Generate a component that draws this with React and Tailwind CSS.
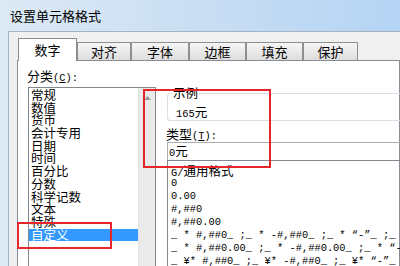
export default function App() {
  const cats = ["常规", "数值", "货币", "会计专用", "日期", "时间", "百分比", "分数", "科学记数", "文本", "特殊"];
  const tabs = [
    ["对齐", "w-[54px]"],
    ["字体", "w-[58px]"],
    ["边框", "w-[57px]"],
    ["填充", "w-[57px]"],
    ["保护", "w-[55px]"],
  ];
  const fmts = [
    "0",
    "0.00",
    "#,##0",
    "#,##0.00",
    "_ * #,##0_ ;_ * -#,##0_ ;_ * “-”_ ;_ @_ ",
    "_ * #,##0.00_ ;_ * -#,##0.00_ ;_ * “-”??_ ;_ @_ ",
    "_ ¥* #,##0_ ;_ ¥* -#,##0_ ;_ ¥* “-”_ ;_ @_ ",
  ];
  const mono = "font-['Liberation_Mono','Noto_Sans_CJK_SC',monospace] text-[10.4px]";
  const cjk = "font-['Noto_Sans_CJK_SC',sans-serif] text-[12.5px]";
  return (
    <div className="relative w-[400px] h-[266px] overflow-hidden bg-gradient-to-r from-[#dde9f5] via-[#c9def3] to-[#b4d4f4] font-['Noto_Sans_CJK_SC',sans-serif] text-[13px] text-black">
      <div className="h-[31px] pl-[10px] pt-[7px] leading-[18px] text-[13px]">设置单元格格式</div>
      <div className="ml-[8px] h-[235px] border-l border-t border-[#a3b3c4] bg-[#f0f0f0] pl-[8px] pt-[6px] flex flex-col">
        <div className="h-[23px] flex items-end">
          <div className="relative z-10 ml-[1px] w-[59px] h-[23px] bg-white border-l border-t border-r border-[#898c95] flex items-center justify-center leading-[16px] pb-[1px]">
            数字
          </div>
          {tabs.map(([t, w]) => (
            <div
              key={t}
              className={`${w} h-[19px] bg-gradient-to-b from-[#f5f5f5] to-[#dcdcdc] border-l border-t border-r border-[#8e8f8f] flex items-center justify-center leading-[16px]`}
            >
              {t}
            </div>
          ))}
        </div>
        <div className="-mt-px flex-1 bg-white border border-[#898c95] flex">
          <div className="ml-[9px] w-[129px] flex flex-col">
            <div className="mt-[7px] h-[16px] leading-[16px]">
              分类<span className={mono}>(<span className="underline">C</span>):</span>
            </div>
            <div className="mt-[3px] ml-[1px] w-[128px] flex-1 border border-[#828790] flex">
              <div className="w-[109px] pt-[1px]">
                {cats.map((c) => (
                  <div key={c} className="h-[12.7px] leading-[12.7px] pl-[2px] text-[12.5px] whitespace-nowrap">
                    {c}
                  </div>
                ))}
                <div className="h-[12.7px] leading-[12.7px] pl-[2px] text-[12.5px] bg-[#3399ff] text-white">自定义</div>
              </div>
              <div className="w-[17px] bg-[#eaeaea] border-l border-[#e0e0e0] flex justify-center pt-[8px]">
                <svg width="7" height="4" viewBox="0 0 7 4">
                  <path d="M0 4 L3.5 0 L7 4 Z" fill="#9a9a9a" />
                </svg>
              </div>
            </div>
          </div>
          <div className="ml-[10px] flex-1 flex flex-col">
            <div className="relative mt-[32px] ml-[1px] h-[28px] border border-[#d5dfe5] rounded-[3px] pl-[8px] pt-[10px]">
              <div className="absolute -top-[9px] left-[4px] px-[1px] bg-white leading-[16px] text-[12.5px]">示例</div>
              <div className="leading-[16px] whitespace-nowrap">
                <span className={mono}>165</span>
                <span className={cjk}>元</span>
              </div>
            </div>
            <div className="mt-[5px] h-[16px] leading-[16px] whitespace-nowrap">
              类型<span className={mono}>(<span className="underline">T</span>):</span>
            </div>
            <div className="ml-[1px] h-[18px] border-l border-t border-[#abadb3] pl-[1px] leading-[16px] whitespace-nowrap">
              <span className={mono}>0</span>
              <span className={cjk}>元</span>
            </div>
            <div className="ml-[1px] flex-1 border-l border-t border-[#828790] pt-[3px] pl-[3px]">
              <div className="h-[13px] leading-[13px] whitespace-nowrap">
                <span className={mono}>G/</span>
                <span className={cjk}>通用格式</span>
              </div>
              {fmts.map((f) => (
                <div key={f} className={`h-[13px] leading-[13px] whitespace-pre ${mono}`}>
                  {f}
                </div>
              ))}
            </div>
          </div>
        </div>
      </div>
      <div className="absolute left-[17px] top-[222px] w-[95px] h-[27px] border-2 border-[#e5262b]" />
      <div className="absolute left-[143px] top-[89px] w-[128px] h-[79px] border-2 border-[#e5262b]" />
    </div>
  );
}
